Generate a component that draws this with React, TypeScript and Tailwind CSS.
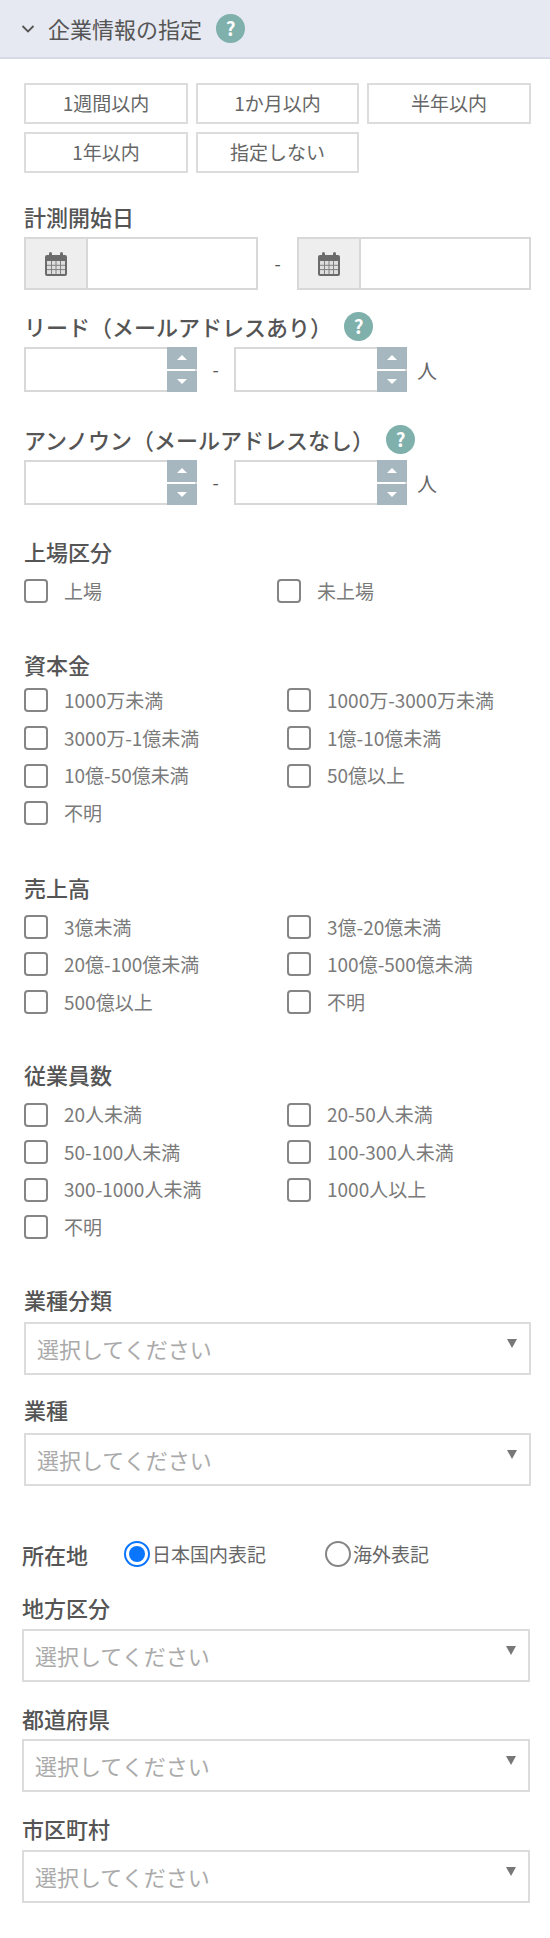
const Help = ({ className = "" }: { className?: string }) => (
  <span className={`flex h-[29px] w-[29px] shrink-0 items-center justify-center rounded-full bg-[#7fb0ab] text-[19px] font-bold text-white ${className}`}>
    ?
  </span>
);

const Calendar = () => (
  <svg width="24" height="26" viewBox="0 0 24 26" fill="none">
    <rect x="1" y="4" width="22" height="21" rx="2" fill="#6b6b6b" />
    <rect x="5" y="1" width="3" height="6" rx="1.5" fill="#6b6b6b" />
    <rect x="16" y="1" width="3" height="6" rx="1.5" fill="#6b6b6b" />
    <rect x="3" y="10" width="18" height="13" fill="#dedede" />
    <path d="M3 14.3h18M3 18.6h18M7.5 10v13M12 10v13M16.5 10v13" stroke="#808080" strokeWidth="1" />
  </svg>
);

const DateInput = () => (
  <div className="flex h-[53px] w-[234px] border-2 border-[#d8d8d8] bg-white">
    <div className="flex w-[62px] items-center justify-center border-r-2 border-[#d8d8d8] bg-[#eeeeee]">
      <Calendar />
    </div>
  </div>
);

const Spinner = () => (
  <div className="flex h-[45px] w-[173px] border-2 border-[#d8d8d8] bg-white">
    <div className="-my-[2px] -mr-[2px] ml-auto flex w-[30px] flex-col gap-[2px]">
      <div className="flex flex-1 items-center justify-center bg-[#a7b7c0]">
        <span className="h-0 w-0 border-x-[5px] border-b-[5px] border-x-transparent border-b-white" />
      </div>
      <div className="flex flex-1 items-center justify-center bg-[#a7b7c0]">
        <span className="h-0 w-0 border-x-[5px] border-t-[5px] border-x-transparent border-t-white" />
      </div>
    </div>
  </div>
);

const RangeRow = () => (
  <div className="mt-[6px] flex items-center">
    <Spinner />
    <span className="w-[37px] text-center text-[18px] text-[#555]">-</span>
    <Spinner />
    <span className="mt-[2px] ml-[10px] text-[20px] text-[#666]">人</span>
  </div>
);

const Label = ({ children, className = "" }: { children: React.ReactNode; className?: string }) => (
  <div className={`flex h-[30px] items-center text-[22px] font-medium whitespace-nowrap text-[#555] ${className}`}>
    {children}
  </div>
);

const Check = ({ text }: { text: string }) => (
  <label className="flex h-[37.6px] items-center">
    <span className="h-[24px] w-[24px] shrink-0 rounded-[4px] border-2 border-[#858585] bg-white" />
    <span className="ml-[16px] text-[19px] whitespace-nowrap text-[#7a7a7a]">{text}</span>
  </label>
);

const CheckGrid = ({ items, className = "" }: { items: string[]; className?: string }) => (
  <div className={`grid grid-cols-[263px_1fr] ${className}`}>
    {items.map((t) => (
      <Check key={t} text={t} />
    ))}
  </div>
);

const Select = ({ className = "" }: { className?: string }) => (
  <div className={`relative flex h-[53px] items-center border-2 border-[#dcdcdc] bg-white pl-[11px] text-[22px] text-[#aaa] ${className}`}>
    選択してください
    <span className="absolute top-[15px] right-[12px] h-0 w-0 border-x-[5px] border-t-[9px] border-x-transparent border-t-[#777]" />
  </div>
);

const Radio = ({ text, on = false, className = "" }: { text: string; on?: boolean; className?: string }) => (
  <label className={`flex items-center ${className}`}>
    {on ? (
      <span className="flex h-[26px] w-[26px] items-center justify-center rounded-full border-2 border-[#0a75ff] bg-white">
        <span className="h-[16px] w-[16px] rounded-full bg-[#0a75ff]" />
      </span>
    ) : (
      <span className="h-[26px] w-[26px] rounded-full border-2 border-[#858585] bg-white" />
    )}
    <span className="ml-[2px] text-[19px] whitespace-nowrap text-[#666]">{text}</span>
  </label>
);

const timeButtons = ["1週間以内", "1か月以内", "半年以内", "1年以内", "指定しない"];

export default function App() {
  return (
    <div className="min-h-[1938px] w-[550px] bg-white font-['Noto_Sans_CJK_JP',sans-serif]">
      {/* Header */}
      <div className="flex h-[59px] items-center border-b-2 border-[#d5dae6] bg-[#e6e9f1] pl-[21px]">
        <svg width="14" height="10" viewBox="0 0 14 10" fill="none">
          <path d="M1.5 2l5.5 5.5L12.5 2" stroke="#555" strokeWidth="1.8" />
        </svg>
        <span className="ml-[13px] text-[22px] text-[#555]">企業情報の指定</span>
        <Help className="ml-[14px]" />
      </div>

      <div className="pr-[19px] pl-[24px]">
        <div className="grid grid-cols-[164px_163px_164px] gap-2 pt-[24px]">
          {timeButtons.map((t) => (
            <button key={t} className="flex h-[41px] items-center justify-center border-2 border-[#dcdcdc] bg-white text-[19px] text-[#666]">
              {t}
            </button>
          ))}
        </div>

        <Label className="mt-[28px]">計測開始日</Label>
        <div className="mt-[6px] flex items-center justify-between">
          <DateInput />
          <span className="text-[18px] text-[#555]">-</span>
          <DateInput />
        </div>

        <Label className="mt-[21px]">
          リード（メールアドレスあり）
          <Help className="ml-[12px]" />
        </Label>
        <RangeRow />

        <Label className="mt-[32px]">
          アンノウン（メールアドレスなし）
          <Help className="ml-[12px]" />
        </Label>
        <RangeRow />

        <Label className="mt-[31px]">上場区分</Label>
        <div className="mt-[6px] grid grid-cols-[253px_1fr]">
          <Check text="上場" />
          <Check text="未上場" />
        </div>

        <Label className="mt-[40px]">資本金</Label>
        <CheckGrid
          className="mt-[2px]"
          items={["1000万未満", "1000万-3000万未満", "3000万-1億未満", "1億-10億未満", "10億-50億未満", "50億以上", "不明"]}
        />

        <Label className="mt-[41px]">売上高</Label>
        <CheckGrid
          className="mt-[5px]"
          items={["3億未満", "3億-20億未満", "20億-100億未満", "100億-500億未満", "500億以上", "不明 "]}
        />

        <Label className="mt-[39px]">従業員数</Label>
        <CheckGrid
          className="mt-[6px]"
          items={["20人未満", "20-50人未満", "50-100人未満", "100-300人未満", "300-1000人未満", "1000人以上", "不明"]}
        />

        <Label className="mt-[38px]">業種分類</Label>
        <Select className="mt-[8px]" />
        <Label className="mt-[19px]">業種</Label>
        <Select className="mt-[9px]" />

        <div className="-ml-[2px] w-[508px] pb-[36px]">
          <div className="mt-[53px] flex h-[30px] items-center">
            <Label className="w-[102px]">所在地</Label>
            <Radio on text="日本国内表記" className="w-[201px]" />
            <Radio text="海外表記" />
          </div>
          <Label className="mt-[23px]">地方区分</Label>
          <Select className="mt-[7px]" />
          <Label className="mt-[21px]">都道府県</Label>
          <Select className="mt-[6px]" />
          <Label className="mt-[21px]">市区町村</Label>
          <Select className="mt-[7px]" />
        </div>
      </div>
    </div>
  );
}
